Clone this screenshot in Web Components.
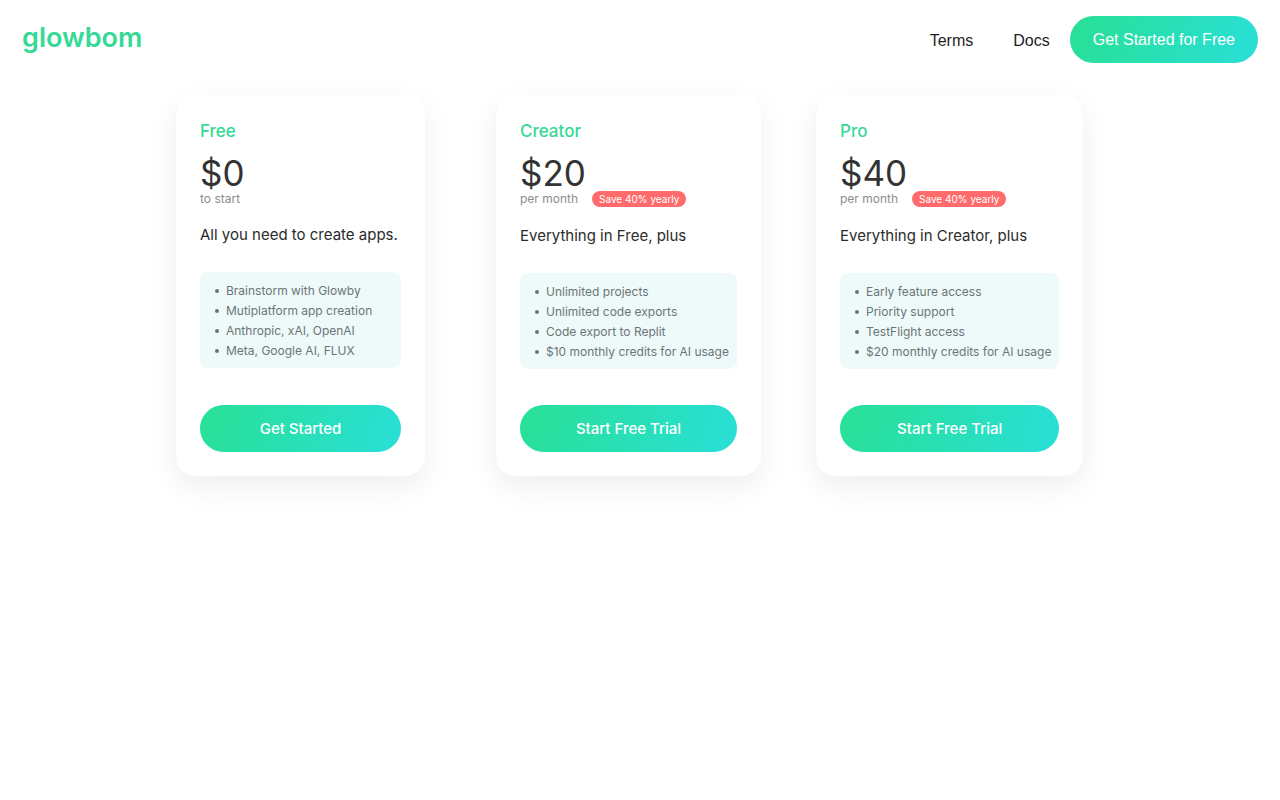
<!DOCTYPE html>
<html lang="en">
<head>
<meta charset="utf-8">
<meta name="viewport" content="width=device-width, initial-scale=1">
<title>Glowbom pricing</title>
<style>
  body { margin: 0; min-height: 100vh; background: #fff; font-family: Inter, "Liberation Sans", sans-serif; color: #2b2b2b; }
</style>
</head>
<body>
<glow-header></glow-header>
<glow-plans>
  <glow-plan name="Free" price="$0" term="to start" summary="All you need to create apps." action="Get Started">
    <li>Brainstorm with Glowby</li>
    <li>Mutiplatform app creation</li>
    <li>Anthropic, xAI, OpenAI</li>
    <li>Meta, Google AI, FLUX</li>
  </glow-plan>
  <glow-plan name="Creator" price="$20" term="per month" badge="Save 40% yearly" summary="Everything in Free, plus" action="Start Free Trial">
    <li>Unlimited projects</li>
    <li>Unlimited code exports</li>
    <li>Code export to Replit</li>
    <li>$10 monthly credits for AI usage</li>
  </glow-plan>
  <glow-plan name="Pro" price="$40" term="per month" badge="Save 40% yearly" summary="Everything in Creator, plus" action="Start Free Trial">
    <li>Early feature access</li>
    <li>Priority support</li>
    <li>TestFlight access</li>
    <li>$20 monthly credits for AI usage</li>
  </glow-plan>
</glow-plans>

<script>
class GlowButton extends HTMLElement {
  constructor() {
    super();
    this.attachShadow({ mode: 'open' }).innerHTML = `
      <style>
        :host { display: block; font-size: 16px; }
        button {
          display: block; width: 100%; border: 0; border-radius: 24px; padding: 12px 23px;
          background: linear-gradient(110deg, #28e094, #29dfd8);
          color: #fff; font: inherit; line-height: 23px; white-space: nowrap; cursor: pointer;
        }
      </style>
      <button type="button"><slot></slot></button>`;
  }
}
customElements.define('glow-button', GlowButton);

class GlowHeader extends HTMLElement {
  constructor() {
    super();
    this.attachShadow({ mode: 'open' }).innerHTML = `
      <style>
        :host { display: block; }
        header { display: flex; align-items: flex-start; justify-content: space-between; padding: 16px 22px; font-family: "Liberation Sans", Arial, sans-serif; }
        .logo { color: #36d996; font: 600 27px/44px Inter, sans-serif; text-decoration: none; }
        nav { display: flex; align-items: center; gap: 20px; }
        .link { padding-top: 2px; color: #1d1d1d; font-size: 16px; line-height: 24px; text-decoration: none; }
        .link:first-child { margin-right: 20px; }
      </style>
      <header>
        <a class="logo" href="#">glowbom</a>
        <nav>
          <a class="link" href="#terms">Terms</a>
          <a class="link" href="#docs">Docs</a>
          <glow-button>Get Started for Free</glow-button>
        </nav>
      </header>`;
  }
}
customElements.define('glow-header', GlowHeader);

class GlowPlans extends HTMLElement {
  constructor() {
    super();
    this.attachShadow({ mode: 'open' }).innerHTML = `
      <style>
        :host { display: block; }
        main {
          display: grid; grid-template-columns: repeat(auto-fit, minmax(280px, 1fr));
          gap: 32px; justify-items: start; max-width: 928px; margin: 0 auto; padding: 16px 16px 48px;
        }
      </style>
      <main><slot></slot></main>`;
  }
}
customElements.define('glow-plans', GlowPlans);

class GlowPlan extends HTMLElement {
  connectedCallback() {
    const badge = this.getAttribute('badge');
    this.attachShadow({ mode: 'open' }).innerHTML = `
      <style>
        :host { display: block; min-width: 249px; }
        article {
          display: flex; flex-direction: column; box-sizing: border-box; height: 100%;
          padding: 24px; border-radius: 20px; background: #fff;
          box-shadow: 0 10px 30px rgba(0, 0, 0, .07);
        }
        h2 { margin: 0; color: #36d996; font-size: 17px; line-height: 24px; font-weight: 500; }
        .price { margin: 12px 0 0; color: #333; font-size: 35px; line-height: 36px; font-weight: 400; }
        .term { display: flex; align-items: flex-start; gap: 14px; margin: 0; color: #8e8e8e; font-size: 12px; line-height: 15px; }
        .badge { padding: 0 7px; border-radius: 8px; background: #ff6b6b; color: #fff; font-size: 10px; line-height: 16px; }
        .summary { margin: 16px 0 0; font-size: 15px; line-height: 26px; white-space: nowrap; }
        ul { margin: 24px 0 36px; padding: 9px 8px 7px 15px; border-radius: 8px; background: #eefafa; color: #6b7575; font-size: 12px; line-height: 20px; }
        ::slotted(li) { display: flex; align-items: center; gap: 7px; }
        ::slotted(li)::before { content: ""; width: 4px; height: 4px; border-radius: 50%; background: currentColor; }
        glow-button { margin-top: auto; font-size: 15px; font-weight: 500; }
      </style>
      <article>
        <h2>${this.getAttribute('name')}</h2>
        <p class="price">${this.getAttribute('price')}</p>
        <p class="term"><span>${this.getAttribute('term')}</span>${badge ? `<span class="badge">${badge}</span>` : ''}</p>
        <p class="summary">${this.getAttribute('summary')}</p>
        <ul><slot></slot></ul>
        <glow-button>${this.getAttribute('action')}</glow-button>
      </article>`;
  }
}
customElements.define('glow-plan', GlowPlan);
</script>
</body>
</html>
